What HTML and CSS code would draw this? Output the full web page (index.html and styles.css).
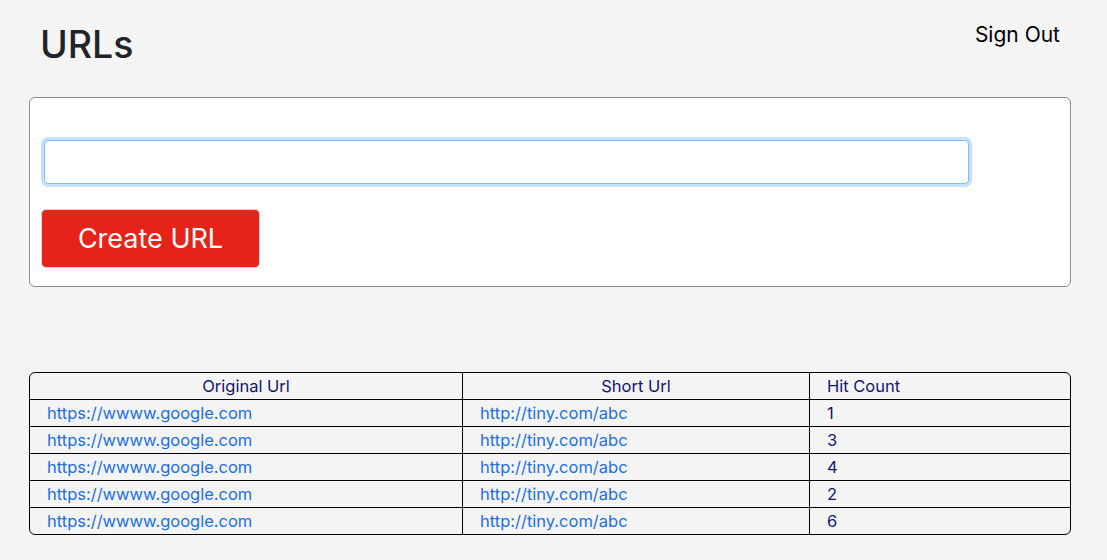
FILE: index.html
```html
<!DOCTYPE html>
<html lang="en">
<head>
<meta charset="utf-8">
<title>URLs</title>
<link rel="stylesheet" href="styles.css">
</head>
<body>
<div class="page">
  <header class="topbar">
    <h1 class="title">URLs</h1>
    <a class="signout">Sign Out</a>
  </header>
  <section class="card">
    <input class="url-input" type="text">
    <button class="create-btn">Create URL</button>
  </section>
  <table class="urls">
    <colgroup>
      <col class="col1"><col class="col2"><col class="col3">
    </colgroup>
    <thead>
      <tr><th class="center">Original Url</th><th class="center">Short Url</th><th>Hit Count</th></tr>
    </thead>
    <tbody>
      <tr><td><a>https://wwww.google.com</a></td><td><a>http://tiny.com/abc</a></td><td>1</td></tr>
      <tr><td><a>https://wwww.google.com</a></td><td><a>http://tiny.com/abc</a></td><td>3</td></tr>
      <tr><td><a>https://wwww.google.com</a></td><td><a>http://tiny.com/abc</a></td><td>4</td></tr>
      <tr><td><a>https://wwww.google.com</a></td><td><a>http://tiny.com/abc</a></td><td>2</td></tr>
      <tr><td><a>https://wwww.google.com</a></td><td><a>http://tiny.com/abc</a></td><td>6</td></tr>
    </tbody>
  </table>
</div>
</body>
</html>
```
FILE: styles.css
```css
body {
  margin: 0;
  background: #f4f4f4;
  font-family: Inter, "Liberation Sans", sans-serif;
}
.page {
  padding: 0 36px 0 29px;
}
.topbar {
  display: flex;
  justify-content: space-between;
  align-items: flex-start;
  height: 97px;
}
.title {
  margin: 21px 0 0 11px;
  font-size: 37.5px;
  font-weight: 500;
  line-height: 48px;
  color: #212529;
}
.signout {
  margin: 23px 11px 0 0;
  font-size: 21px;
  line-height: 24px;
  color: #000;
}
.card {
  background: #fff;
  border: 1px solid #8a8a8a;
  border-radius: 6px;
  padding: 42px 14px 18px 11px;
}
.url-input {
  display: block;
  box-sizing: border-box;
  width: 925px;
  height: 44px;
  margin: 0 0 0 3px;
  border: 1px solid #80bdff;
  border-radius: 4px;
  box-shadow: 0 0 0 3px #c6e1fb;
  outline: none;
  background: #fff;
}
.create-btn {
  display: block;
  box-sizing: border-box;
  width: 219px;
  height: 59px;
  margin-top: 25px;
  background: #e52319;
  color: #fff;
  border: 1px solid #d4d4d4;
  border-radius: 5px;
  font-family: Inter, "Liberation Sans", sans-serif;
  font-size: 27px;
  font-weight: 400;
}
.urls {
  margin-top: 85px;
  width: 1042px;
  table-layout: fixed;
  border: 1px solid #000;
  border-radius: 6px;
  border-spacing: 0;
  border-collapse: separate;
  font-size: 16.5px;
  color: #14146e;
}
.col1 { width: 432px; }
.col2 { width: 347px; }
.col3 { width: 261px; }
.urls th, .urls td {
  box-sizing: border-box;
  height: 26px;
  padding: 0 0 0 17px;
  font-weight: 400;
  text-align: left;
  vertical-align: middle;
  white-space: nowrap;
}
.urls td {
  height: 27px;
  border-top: 1px solid #000;
}
.urls th + th, .urls td + td {
  border-left: 1px solid #000;
}
.urls th.center {
  text-align: center;
  padding: 0;
}
.urls a {
  color: #1c6fe6;
}
```
